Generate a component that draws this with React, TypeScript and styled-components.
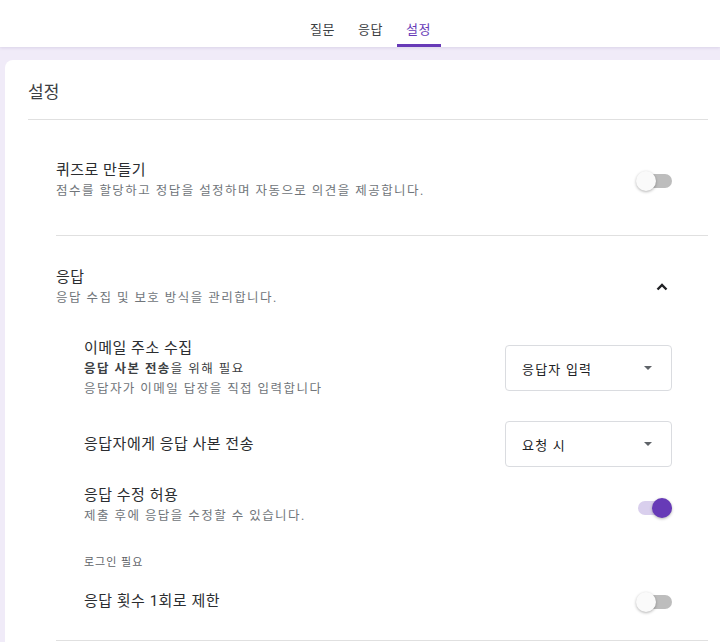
import React, { useState } from "react"
import styled, { createGlobalStyle } from "styled-components"

const GlobalStyle = createGlobalStyle`
  html, body {
    margin: 0;
    padding: 0;
    background: #f0ebf8;
    overflow-x: hidden;
    font-family: Roboto, "Noto Sans CJK KR", "Noto Sans", sans-serif;
    color: #202124;
  }
`

const Header = styled.header`
  height: 47px;
  background: #ffffff;
  display: flex;
  justify-content: center;
  align-items: stretch;
  box-shadow: 0 1px 3px rgba(60, 40, 120, 0.12);
  position: relative;
  z-index: 1;
`

const Tabs = styled.nav`
  display: flex;
  gap: 4px;
  margin-left: 21px;
`

const Tab = styled.div<{ $active?: boolean }>`
  width: 44px;
  display: flex;
  justify-content: center;
  align-items: center;
  padding-top: 13px;
  box-sizing: border-box;
  font-size: 13px;
  letter-spacing: 0.5px;
  color: ${(p) => (p.$active ? "#673ab7" : "#3c4043")};
  border-bottom: 3px solid ${(p) => (p.$active ? "#673ab7" : "transparent")};
  border-radius: 2px 2px 0 0;
  cursor: pointer;
`

const Card = styled.main`
  margin: 13px 0 0 5px;
  width: 723px;
  background: #ffffff;
  border-radius: 8px 8px 0 0;
  padding: 0 20px 0 23px;
  box-sizing: border-box;
  min-height: 600px;
`

const PageTitle = styled.h1`
  margin: 0;
  padding: 20px 0 15px;
  font-size: 17px;
  font-weight: 400;
  line-height: 24px;
  color: #3c4043;
  border-bottom: 1px solid #e0e0e0;
`

const Section = styled.section<{ $top: number; $bottom: number }>`
  margin-left: 28px;
  padding: ${(p) => p.$top}px 36px ${(p) => p.$bottom}px 0;
  border-bottom: 1px solid #e0e0e0;
`

const Row = styled.div<{ $top?: number }>`
  display: flex;
  align-items: center;
  justify-content: space-between;
  margin-top: ${(p) => p.$top ?? 0}px;
`

const SubList = styled.div`
  margin-left: 28px;
`

const TextBlock = styled.div`
  display: flex;
  flex-direction: column;
`

const Title = styled.div`
  font-size: 15px;
  line-height: 22px;
  letter-spacing: 0.5px;
  color: #2b2d30;
`

const Desc = styled.div<{ $dark?: boolean }>`
  font-size: 12.5px;
  line-height: 20px;
  letter-spacing: 1.45px;
  color: ${(p) => (p.$dark ? "#3c4043" : "#70757a")};
  b {
    font-weight: 700;
    color: #3c4043;
  }
`

const Caption = styled.div`
  font-size: 11px;
  line-height: 16px;
  color: #5f6368;
  margin-top: 29px;
  letter-spacing: 1px;
`

const SwitchWrap = styled.div<{ $shift?: number }>`
  position: relative;
  width: 36px;
  height: 20px;
  flex-shrink: 0;
  cursor: pointer;
  margin-top: ${(p) => p.$shift ?? 0}px;
`

const Track = styled.div<{ $on: boolean }>`
  position: absolute;
  left: 2px;
  right: 0;
  top: 3px;
  height: 14px;
  border-radius: 7px;
  background: ${(p) => (p.$on ? "#d9cfed" : "#bdbdbd")};
`

const Thumb = styled.div<{ $on: boolean }>`
  position: absolute;
  top: 0;
  left: ${(p) => (p.$on ? "16px" : "0")};
  width: 20px;
  height: 20px;
  border-radius: 50%;
  background: ${(p) => (p.$on ? "#673ab7" : "#fafafa")};
  box-shadow: 0 1px 3px rgba(0, 0, 0, 0.3);
`

const Select = styled.div`
  width: 167px;
  height: 46px;
  box-sizing: border-box;
  border: 1px solid #dadce0;
  border-radius: 4px;
  padding: 0 19px 0 16px;
  display: flex;
  align-items: center;
  justify-content: space-between;
  font-size: 13px;
  letter-spacing: 1.2px;
  color: #202124;
  flex-shrink: 0;
  cursor: pointer;
`

const Caret = styled.span`
  width: 0;
  height: 0;
  border-left: 4.5px solid transparent;
  border-right: 4.5px solid transparent;
  border-top: 4.5px solid #5f6368;
`

const ChevronBtn = styled.div`
  width: 24px;
  height: 24px;
  display: flex;
  align-items: center;
  justify-content: center;
  margin-right: -2px;
`

function Switch({ initial, shift }: { initial: boolean; shift?: number }) {
  const [on, setOn] = useState(initial)
  return (
    <SwitchWrap $shift={shift} onClick={() => setOn(!on)}>
      <Track $on={on} />
      <Thumb $on={on} />
    </SwitchWrap>
  )
}

function App() {
  return (
    <>
      <GlobalStyle />
      <Header>
        <Tabs>
          <Tab>질문</Tab>
          <Tab>응답</Tab>
          <Tab $active>설정</Tab>
        </Tabs>
      </Header>
      <Card>
        <PageTitle>설정</PageTitle>
        <Section $top={39} $bottom={34}>
          <Row>
            <TextBlock>
              <Title>퀴즈로 만들기</Title>
              <Desc>점수를 할당하고 정답을 설정하며 자동으로 의견을 제공합니다.</Desc>
            </TextBlock>
            <Switch initial={false} shift={2} />
          </Row>
        </Section>
        <Section $top={30} $bottom={28}>
          <Row>
            <TextBlock>
              <Title>응답</Title>
              <Desc>응답 수집 및 보호 방식을 관리합니다.</Desc>
            </TextBlock>
            <ChevronBtn>
              <svg width="12" height="8" viewBox="0 0 12 8">
                <polyline
                  points="1.5,6.5 6,2 10.5,6.5"
                  fill="none"
                  stroke="#202124"
                  strokeWidth="2.4"
                />
              </svg>
            </ChevronBtn>
          </Row>
          <SubList>
            <Row $top={29}>
              <TextBlock>
                <Title>이메일 주소 수집</Title>
                <Desc $dark>
                  <b>응답 사본 전송</b>을 위해 필요
                </Desc>
                <Desc>응답자가 이메일 답장을 직접 입력합니다</Desc>
              </TextBlock>
              <Select>
                응답자 입력
                <Caret />
              </Select>
            </Row>
            <Row $top={22}>
              <Title>응답자에게 응답 사본 전송</Title>
              <Select>
                요청 시
                <Caret />
              </Select>
            </Row>
            <Row $top={17}>
              <TextBlock>
                <Title>응답 수정 허용</Title>
                <Desc>제출 후에 응답을 수정할 수 있습니다.</Desc>
              </TextBlock>
              <Switch initial={true} shift={6} />
            </Row>
            <Caption>로그인 필요</Caption>
            <Row $top={19}>
              <Title>응답 횟수 1회로 제한</Title>
              <Switch initial={false} shift={2} />
            </Row>
          </SubList>
        </Section>
      </Card>
    </>
  )
}

export default App
